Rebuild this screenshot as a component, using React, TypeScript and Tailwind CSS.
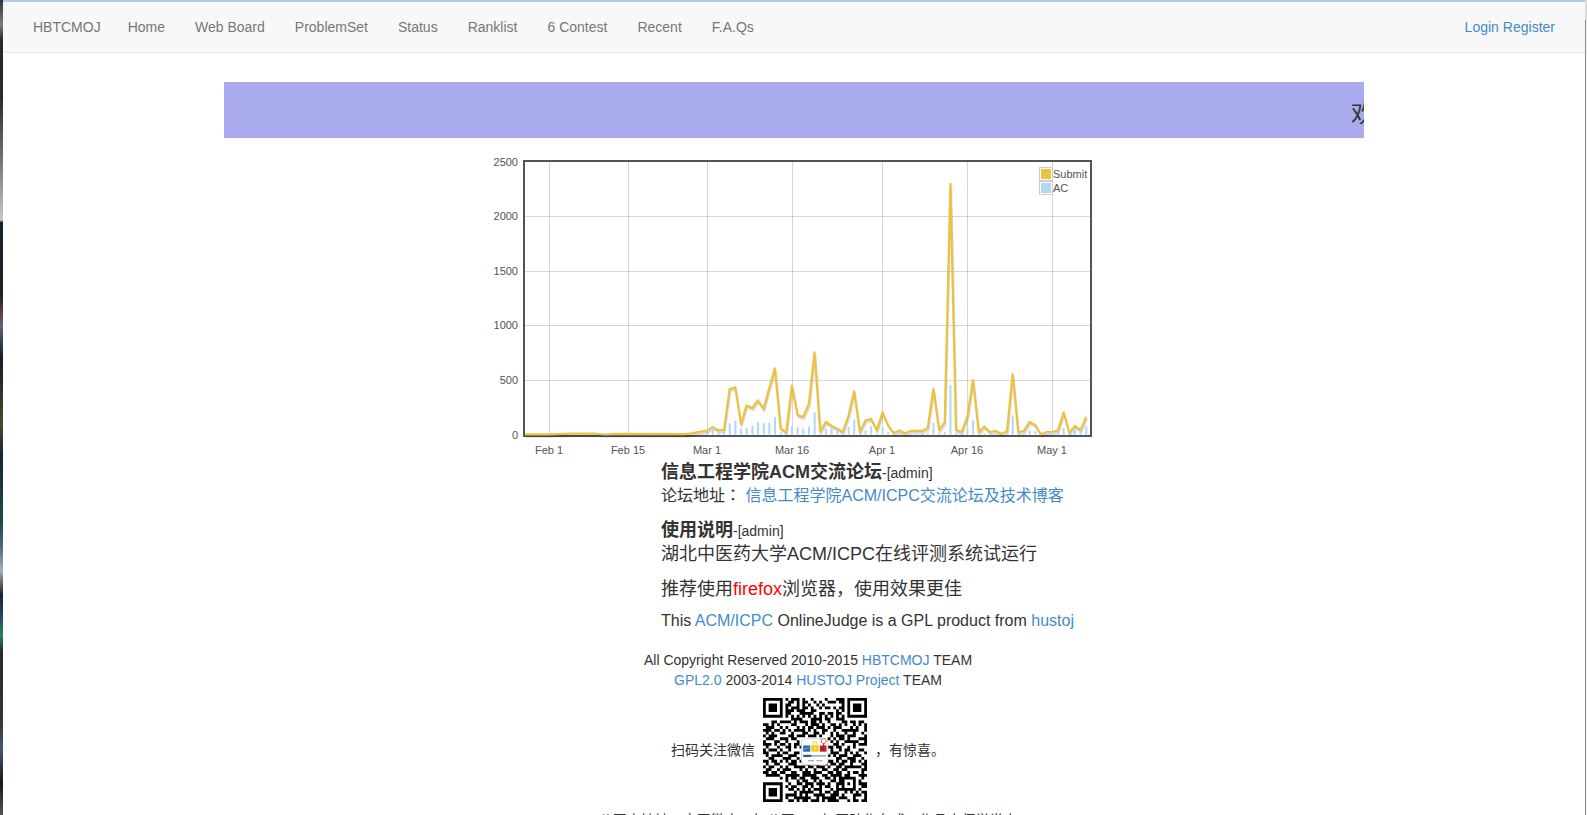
import React from "react";

const NAV = ["Home", "Web Board", "ProblemSet", "Status", "Ranklist", "6 Contest", "Recent", "F.A.Qs"];

// Submissions per day; day 0 is March 1.
const EARLY: [number, number][] = [
  [-33, 2], [-28, 2], [-24, 8], [-20, 10], [-18, 1], [-16, 6], [-4, 4], [-3, 8],
];
const SUBMIT = [
  37, 68, 40, 40, 418, 430, 98, 268, 244, 314, 235, 427, 607, 58, 20, 448, 177, 162, 280, 753, 30, 116, 82, 55, 24,
  174, 396, 27, 128, 146, 40, 204, 85, 14, 37, 12, 34, 34, 34, 60, 421, 43, 113, 2296, 43, 24, 165, 500, 24, 73, 21,
  34, 6, 30, 555, 21, 34, 116, 88, 3, 24, 24, 37, 204, 15, 79, 43, 162,
];
const AC = [
  10, 60, 30, 30, 104, 128, 55, 58, 82, 116, 104, 110, 162, 20, 10, 76, 67, 55, 76, 204, 10, 49, 60, 40, 10, 70, 140,
  15, 37, 76, 10, 67, 27, 10, 15, 5, 8, 8, 15, 15, 107, 15, 24, 451, 15, 10, 49, 134, 10, 15, 10, 10, 0, 10, 174, 15,
  15, 37, 34, 0, 24, 24, 15, 61, 10, 46, 37, 76,
];
const X_TICKS: [number, string][] = [
  [55, "Feb 1"], [134, "Feb 15"], [213, "Mar 1"], [298, "Mar 16"], [388, "Apr 1"], [473, "Apr 16"], [558, "May 1"],
];
const Y_TICKS: [number, number][] = [
  [8, 2500], [62, 2000], [117, 1500], [171, 1000], [226, 500], [281, 0],
];

const dayX = (d: number) => 213 + 5.66 * d;
const valueY = (v: number) => 280.6 - v * 0.1092;

function Chart() {
  const points = [...EARLY, ...SUBMIT.map((v, i) => [i, v] as [number, number])]
    .map(([d, v]) => `${Math.max(dayX(d), 31).toFixed(1)},${valueY(v).toFixed(1)}`)
    .join(" ");
  return (
    <svg viewBox="0 0 600 300" className="mx-auto mt-4 block h-[300px] w-[600px] overflow-visible font-['Liberation_Sans',sans-serif] text-[11px]" role="img" aria-label="Submit and AC per day">
      <g fill="#545454" fillOpacity="0.24">
        {X_TICKS.map(([x]) => <rect key={x} x={x} y="8" width="1" height="273" />)}
        {Y_TICKS.slice(1, 5).map(([y]) => <rect key={y} x="31" y={y} width="565" height="1" />)}
      </g>
      <rect x="30" y="7" width="567" height="275" fill="none" stroke="#545454" strokeWidth="2" />
      <g fill="none" strokeLinejoin="round">
        <polyline points={points} stroke="#000" strokeOpacity="0.1" strokeWidth="2" transform="translate(1 2.5)" />
        <polyline points={points} stroke="#000" strokeOpacity="0.1" strokeWidth="1.5" transform="translate(.5 1.5)" />
        <polyline points={points} stroke="#edc240" strokeWidth="2.2" />
      </g>
      <g fill="#afd8f8">
        {AC.map((v, i) => <rect key={i} x={dayX(i) - 0.9} y={valueY(v)} width="2" height={v * 0.1092} />)}
        {[-27, -19, -18, -17, -3].map((d) => <rect key={d} x={dayX(d)} y="279.5" width="2" height="1" />)}
      </g>
      <g fill="#545454">
        {Y_TICKS.map(([y, v]) => <text key={v} x="24" y={y + 4} textAnchor="end">{v}</text>)}
        {X_TICKS.map(([x, label]) => <text key={label} x={x} y="300" textAnchor="middle">{label}</text>)}
      </g>
      <rect x="544" y="13" width="48" height="28" fill="#fff" fillOpacity="0.85" />
      <g fill="#fff" stroke="#ccc">
        <rect x="545.5" y="13.5" width="13" height="13" />
        <rect x="545.5" y="27.5" width="13" height="13" />
      </g>
      <rect x="547" y="15" width="10" height="10" fill="#edc240" />
      <rect x="547" y="29" width="10" height="10" fill="#afd8f8" />
      <g fill="#545454">
        <text x="559" y="24">Submit</text>
        <text x="559" y="38">AC</text>
      </g>
    </svg>
  );
}

const QR = [
  "1111111010111010010000100011101111111",
  "1000001001101011001010011101101000001",
  "1011101011001010100101000000101011101",
  "1011101010111011010010110101101011101",
  "1011101011101110011000000010101011101",
  "1000001011000111110011011011001000001",
  "1111111010101010101010101010101111111",
  "0000000000111100011110110011100000000",
  "0001101111010111011010010000110110110",
  "1101010000110001011101001101010010101",
  "0111001010001010110111010111000101001",
  "1110110101011110101001100100111111001",
  "0101001100100011001101001010010010010",
  "1011100001101110111010001011101110001",
  "0111001110110000000000010101101000111",
  "1000110010001000000000001010011111001",
  "1110101101011000000000000110100010111",
  "0100010011010100000000011011001010000",
  "1011101001000000000000001001011000110",
  "1100010110011000000000001110010101001",
  "0101111001110000000000010101110011100",
  "0011000111001000000000000011001110010",
  "1101101010110100000000011010110110101",
  "0100110001110001101100101101100100011",
  "1011001010011110110111010011011111101",
  "0110010111000101001001100110110000011",
  "1101101100110011101110011011001011010",
  "0111110011111011111001101111011000111",
  "0000001010110110011100110101111110010",
  "0000000010001011001010001101100010100",
  "1111111001001101110111010011101010111",
  "1000001010110011010010110010100010011",
  "1011101001101010101110001011111110100",
  "1011101000010111110010110110010101011",
  "1011101011110101001111001110100011101",
  "1000001010011111100101111101110010001",
  "1111111001101011011101011110001011011",
];

function QrCode() {
  const modules = QR.flatMap((row, y) => [...row].map((c, x) => (c === "1" ? `M${x} ${y}h1v1h-1z` : ""))).join("");
  return (
    <svg viewBox="0 0 37 37" className="ml-2 h-[104px] w-[104px]" role="img" aria-label="QR code">
      <path d={modules} fill="#000" />
      <rect x="13.7" y="14.5" width="9.4" height="9.3" rx="1.2" fill="#fff" stroke="#ccc" strokeWidth=".3" />
      <rect x="14.3" y="16.9" width="2.5" height="2.2" fill="#2568b5" />
      <path d="M14.7 18.1h.8l.4-.4h.5" fill="none" stroke="#b9d6f3" strokeWidth=".25" />
      <rect x="17.2" y="16.8" width="2.6" height="2.3" fill="#f6c91b" />
      <path d="M17.8 16.9v-.6a.7.7 0 0 1 1.4 0v.6" fill="none" stroke="#f6d64b" strokeWidth=".4" />
      <path d="M18.5 17.4v1" stroke="#fff3b0" strokeWidth=".4" />
      <rect x="20.2" y="16.9" width="2.4" height="2.2" fill="#b8282b" />
      <circle cx="21.6" cy="15.3" r=".9" fill="#fff" stroke="#d66" strokeWidth=".35" />
      <path d="M21.6 16.2v1.2M20.9 18.1h.8" stroke="#611" strokeWidth=".35" />
      <path d="M14.3 20.6h3" stroke="#345a82" strokeWidth=".8" />
      <path d="M17.3 20.6h5.2" stroke="#8fb0d0" strokeWidth=".6" />
      <path d="M16 22.3h2.2" stroke="#89b5e2" strokeWidth=".5" />
      <path d="M19 22.3h2.2" stroke="#e29a9a" strokeWidth=".5" />
    </svg>
  );
}

function Link({ children }: { children: React.ReactNode }) {
  return <a href="#" className="text-[#428bca] hover:underline">{children}</a>;
}

export default function App() {
  return (
    <div className="flex h-screen overflow-hidden bg-white font-['Liberation_Sans','Noto_Sans_CJK_SC',sans-serif] text-sm leading-5 text-[#333]">
      <div className="w-[3px] shrink-0 bg-[linear-gradient(to_bottom,#30343a_0%,#777d84_3%,#24272c_5%,#2a2a30_12%,#77777b_20%,#c8c8c8_27%,#182331_27.3%,#1a2028_36%,#5d3437_38%,#5a6876_40%,#141c28_44%,#4b4a26_52%,#182434_56%,#1b4d45_64%,#4f657b_67%,#a5b0b8_70%,#1b222b_73%,#264e78_76%,#2d8060_78%,#262b32_80%,#393127_88%,#46566f_92%,#171717_96%,#555_100%)]" />
      <div className="min-w-0 flex-1">
        <nav className="flex h-[53px] items-center justify-between border-t-2 border-b border-t-[#b5cde3] border-b-[#e7e7e7] bg-[#f8f8f8] pr-[30px] pl-[30px]">
          <div className="flex">
            <a href="#" className="pr-3 text-[#777] hover:text-[#333]">HBTCMOJ</a>
            {NAV.map((label) => (
              <a key={label} href="#" className="px-[15px] text-[#777] hover:text-[#333]">{label}</a>
            ))}
          </div>
          <div className="flex gap-1">
            <Link>Login</Link>
            <Link>Register</Link>
          </div>
        </nav>

        <main className="mx-auto mt-[29px] max-w-[1140px]">
          <div className="flex h-14 justify-end overflow-hidden bg-[#aaaaee]">
            <div className="mt-3.5 w-[13px] overflow-hidden text-2xl leading-9 whitespace-nowrap">欢迎</div>
          </div>

          <Chart />

          <section className="pt-1.5 pl-[437px] text-lg leading-6 whitespace-nowrap">
            <h2><b>信息工程学院ACM交流论坛</b><small className="text-sm">-[admin]</small></h2>
            <p className="text-base">论坛地址<span className="font-['Noto_Sans_CJK_TC',sans-serif] leading-none">：</span> <Link>信息工程学院ACM/ICPC交流论坛及技术博客</Link></p>
            <h2 className="mt-2.5"><b>使用说明</b><small className="text-sm">-[admin]</small></h2>
            <p>湖北中医药大学ACM/ICPC在线评测系统试运行</p>
            <p className="mt-[11px]">推荐使用<span className="text-[#ff0000]">firefox</span>浏览器，使用效果更佳</p>
            <p className="mt-2 text-base">This <Link>ACM/ICPC</Link> OnlineJudge is a GPL product from <Link>hustoj</Link></p>
          </section>

          <footer className="mt-[17px] pl-7 text-center">
            <p>All Copyright Reserved 2010-2015 <Link>HBTCMOJ</Link> TEAM</p>
            <p><Link>GPL2.0</Link> 2003-2014 <Link>HUSTOJ Project</Link> TEAM</p>
            <div className="mt-2 flex items-center justify-center">
              <span>扫码关注微信</span>
              <QrCode />
              <span className="ml-2">，有惊喜。</span>
            </div>
            <p className="mt-2">公网内地址：本网微内，如公网acm如国防作台或，作品内师学堂内</p>
          </footer>
        </main>
      </div>
      <div className="flex w-0.5 shrink-0 flex-col bg-[#f3f3f3]">
        <div className="h-5 bg-[#dcdcdc]" />
        <div className="flex-1 border-l border-[#8c8c8c]" />
      </div>
    </div>
  );
}
